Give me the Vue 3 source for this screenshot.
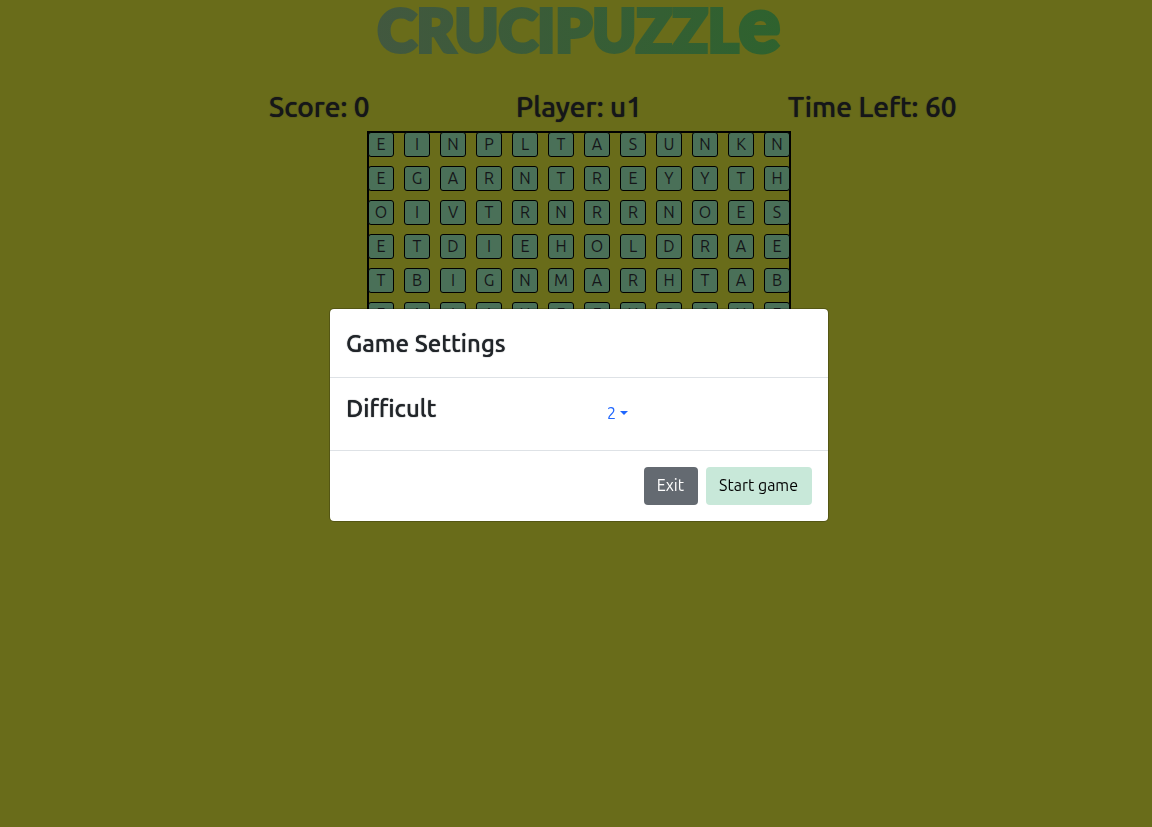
<script setup>
import { ref } from 'vue'

const rows = [
  'EINPLTASUNKN',
  'EGARNTREYYTH',
  'OIVTRNRRNOES',
  'ETDIEHOLDRAE',
  'TBIGNMARHTAB',
  'EAIAUEFUSOUE',
]
const difficulty = ref('2')
</script>

<template>
  <div class="page">
    <h1 class="title">CRUCIPUZZL<span class="tall">e</span></h1>
    <div class="stats">
      <h3>Score: 0</h3>
      <h3>Player: u1</h3>
      <h3>Time Left: 60</h3>
    </div>
    <main class="board">
      <div v-for="(row, r) in rows" :key="r" class="row">
        <span v-for="(letter, c) in row" :key="c" class="tile">{{ letter }}</span>
      </div>
    </main>

    <div class="overlay">
      <section class="modal" role="dialog" aria-labelledby="settings-title">
        <header class="modal-header">
          <h4 id="settings-title">Game Settings</h4>
        </header>
        <div class="modal-body">
          <label for="difficulty">Difficult</label>
          <div class="picker">
            <select id="difficulty" v-model="difficulty">
              <option>1</option>
              <option>2</option>
              <option>3</option>
            </select>
          </div>
        </div>
        <footer class="modal-footer">
          <button type="button" class="exit">Exit</button>
          <button type="button" class="start">Start game</button>
        </footer>
      </section>
    </div>
  </div>
</template>

<style>
body {
  margin: 0;
  background: #696c1a;
}
</style>

<style scoped>
* {
  box-sizing: border-box;
}
.page {
  font-family: Ubuntu, "Noto Sans", sans-serif;
  font-size: 16px;
  line-height: 24px;
  color: #151619;
  min-height: 100vh;
  padding-left: 6px;
}
h1,
h3,
h4 {
  margin: 0;
  font-weight: 500;
}
.title {
  width: fit-content;
  margin: 0 auto;
  padding: 0 2px;
  height: 90px;
  font-family: "Luckiest Guy", Lato, sans-serif;
  font-size: 59px;
  font-weight: 900;
  line-height: 60px;
  white-space: nowrap;
  color: transparent;
  background: linear-gradient(90deg, #42583f, #2e622e);
  -webkit-background-clip: text;
  background-clip: text;
  -webkit-text-stroke: 4px transparent;
}
.tall {
  font-size: 78px;
  line-height: 40px;
}
.stats {
  display: grid;
  grid-template-columns: 247px 272px 168px;
  justify-content: center;
  padding-left: 67px;
}
.stats h3 {
  font-size: 28px;
  line-height: 34px;
  white-space: nowrap;
}
.stats h3,
.modal-header h4,
.modal-body label {
  text-shadow: 0 0 1px currentColor;
}
.board {
  width: fit-content;
  margin: 7px auto 0;
  border: 2px solid #000;
}
.row {
  display: flex;
  gap: 10px;
  height: 34px;
  margin: 0 -1px;
}
.tile {
  width: 26px;
  height: 25px;
  margin-top: -1px;
  border: 1px solid #000;
  border-radius: 3px;
  background: #4a7058;
  line-height: 22px;
  text-align: center;
}
.overlay {
  position: fixed;
  inset: 0;
  padding: 308px 0 0 6px;
}
.modal {
  width: 500px;
  max-width: 100%;
  margin: 0 auto;
  background: #fff;
  background-clip: padding-box;
  border: 1px solid rgba(0, 0, 0, 0.2);
  border-radius: 5px;
  color: #212529;
}
.modal-header {
  padding: 17px 16px 15px;
  border-bottom: 1px solid #dee2e6;
}
.modal-header h4,
.modal-body label {
  font-size: 24px;
  line-height: 36px;
  font-weight: 500;
}
.modal-body {
  display: grid;
  grid-template-columns: 1fr 1fr;
  padding: 13px 16px 19px;
}
.picker {
  position: relative;
  width: 48px;
  margin-left: 15px;
  padding-top: 4px;
}
.picker::after {
  content: "";
  position: absolute;
  left: 26px;
  top: 20px;
  border: 4px solid transparent;
  border-top-color: #1f66fe;
  border-bottom: 0;
  pointer-events: none;
}
select {
  appearance: none;
  width: 100%;
  height: 36px;
  padding: 0 13px;
  border: 0;
  background: transparent;
  color: #1f66fe;
  font: inherit;
}
.modal-footer {
  display: flex;
  justify-content: flex-end;
  gap: 8px;
  padding: 16px;
  border-top: 1px solid #dee2e6;
}
button {
  height: 38px;
  padding: 0 13px 2px 12px;
  border: 1px solid transparent;
  border-radius: 4px;
  font: inherit;
}
.exit {
  background: #646a71;
  color: #fff;
}
.start {
  background: #c8e8d9;
  color: #000;
}
</style>
